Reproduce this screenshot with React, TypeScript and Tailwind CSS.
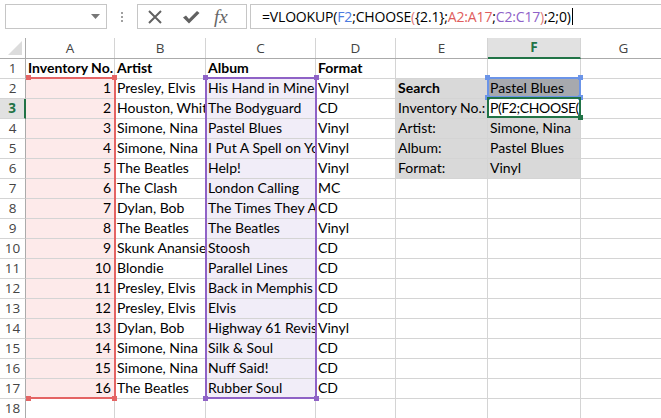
import React from "react";

const COLS = [
  { key: "A", w: 89 },
  { key: "B", w: 91 },
  { key: "C", w: 110 },
  { key: "D", w: 80 },
  { key: "E", w: 92 },
  { key: "F", w: 93 },
  { key: "G", w: 86 },
];

const DATA: [string, string, string][] = [
  ["Presley, Elvis", "His Hand in Mine", "Vinyl"],
  ["Houston, Whitney", "The Bodyguard", "CD"],
  ["Simone, Nina", "Pastel Blues", "Vinyl"],
  ["Simone, Nina", "I Put A Spell on You", "Vinyl"],
  ["The Beatles", "Help!", "Vinyl"],
  ["The Clash", "London Calling", "MC"],
  ["Dylan, Bob", "The Times They Are a-Changin'", "CD"],
  ["The Beatles", "The Beatles", "Vinyl"],
  ["Skunk Anansie", "Stoosh", "CD"],
  ["Blondie", "Parallel Lines", "CD"],
  ["Presley, Elvis", "Back in Memphis", "CD"],
  ["Presley, Elvis", "Elvis", "CD"],
  ["Dylan, Bob", "Highway 61 Revisited", "Vinyl"],
  ["Simone, Nina", "Silk & Soul", "CD"],
  ["Simone, Nina", "Nuff Said!", "CD"],
  ["The Beatles", "Rubber Soul", "CD"],
];

const LOOKUP: Record<number, [string, string, boolean?]> = {
  2: ["Search", "Pastel Blues", true],
  3: ["Inventory No.:", "P(F2;CHOOSE({"],
  4: ["Artist:", "Simone, Nina"],
  5: ["Album:", "Pastel Blues"],
  6: ["Format:", "Vinyl"],
};

type CellProps = {
  w: number;
  bg?: string;
  right?: boolean;
  bold?: boolean;
  tight?: boolean;
  children?: React.ReactNode;
};

function Cell({ w, bg, right, bold, tight, children }: CellProps) {
  return (
    <div
      className={`h-full shrink-0 border-r border-b border-[#d4d4d4] overflow-hidden whitespace-nowrap flex items-end pb-[1px] text-[14px] leading-[18px] text-black ${
        right ? "justify-end pr-[3px]" : "pl-[2px]"
      } ${bold ? "font-bold" : ""} ${tight ? "tracking-[-0.4px]" : ""} ${bg ?? ""}`}
      style={{ width: w }}
    >
      {children}
    </div>
  );
}

function Handle({ className }: { className: string }) {
  return <div className={`absolute w-[5px] h-[5px] ${className}`} />;
}

function FormulaBar() {
  return (
    <div className="h-[38px] flex items-start pt-[4px] bg-white">
      <div className="ml-[5px] w-[102px] h-[25px] border border-[#c6c6c6] flex items-center justify-end pr-[6px]">
        <svg width="9" height="5" viewBox="0 0 9 5">
          <path d="M0 0 L9 0 L4.5 5 Z" fill="#777" />
        </svg>
      </div>
      <div className="w-[30px] h-[25px] flex flex-col items-center justify-center gap-[2px]">
        <div className="w-[2px] h-[2px] bg-[#a0a0a0]" />
        <div className="w-[2px] h-[2px] bg-[#a0a0a0]" />
        <div className="w-[2px] h-[2px] bg-[#a0a0a0]" />
      </div>
      <div className="w-[110px] h-[25px] border border-[#c6c6c6] flex items-center">
        <svg className="ml-[9px]" width="16" height="16" viewBox="0 0 16 16">
          <path d="M2 2 L14 14 M14 2 L2 14" stroke="#616161" strokeWidth="2" />
        </svg>
        <svg className="ml-[19px]" width="18" height="16" viewBox="0 0 18 16">
          <path d="M1 8.5 L4 6.5 L7 10 L15 2 L17.5 4 L7 14.5 Z" fill="#616161" />
        </svg>
        <span
          className="ml-[14px] text-[19px] italic text-[#666] leading-none"
          style={{ fontFamily: '"Liberation Serif", serif' }}
        >
          fx
        </span>
      </div>
      <div className="ml-[3px] flex-1 h-[25px] border-t border-b border-l border-[#c6c6c6] flex items-center pl-[11px] text-[14px] text-black">
        <span style={{ fontFamily: '"Open Sans", sans-serif', letterSpacing: "-0.17px" }}>
          =VLOOKUP(<span className="text-[#4b7be0]">F2</span>;CHOOSE
          <span className="text-[#e07a7a]">(</span>
          {"{2.1};"}
          <span className="text-[#e05c5c]">A2:A17</span>;
          <span className="text-[#8e62c8]">C2:C17</span>
          <span className="text-[#e07a7a]">)</span>;2;0)
        </span>
        <div className="w-[1px] h-[17px] bg-black ml-[1px]" />
      </div>
    </div>
  );
}

function HeaderRow() {
  return (
    <div
      className="h-[21px] flex border-b border-[#ababab] text-[13.5px] text-[#444]"
      style={{ fontFamily: '"Open Sans", sans-serif' }}
    >
      <div className="w-[26px] shrink-0 h-full border-r border-[#ababab] relative">
        <svg className="absolute right-[3px] bottom-[3px]" width="14" height="14" viewBox="0 0 14 14">
          <path d="M14 0 L14 14 L0 14 Z" fill="#dcdcdc" />
        </svg>
      </div>
      {COLS.map((c) =>
        c.key === "F" ? (
          <div
            key={c.key}
            className="shrink-0 h-[21px] -mb-[1px] bg-[#e1e1e1] border-r border-[#d4d4d4] border-b-2 border-b-[#217346] flex items-center justify-center font-bold text-[#217346]"
            style={{ width: c.w }}
          >
            F
          </div>
        ) : (
          <div
            key={c.key}
            className="shrink-0 h-full border-r border-[#d4d4d4] flex items-center justify-center"
            style={{ width: c.w }}
          >
            {c.key}
          </div>
        )
      )}
    </div>
  );
}

function RowHeader({ n }: { n: number }) {
  const active = n === 3;
  return (
    <div
      className={`w-[26px] shrink-0 h-full border-b border-[#d4d4d4] flex items-center justify-center text-[13.5px] ${
        active
          ? "bg-[#e1e1e1] border-r-2 border-r-[#217346] text-[#217346] font-bold"
          : "border-r border-r-[#ababab] text-[#444]"
      }`}
      style={{ fontFamily: '"Open Sans", sans-serif' }}
    >
      {n}
    </div>
  );
}

function Row({ n }: { n: number }) {
  const d = n >= 2 && n <= 17 ? DATA[n - 2] : null;
  const look = LOOKUP[n];
  let a: React.ReactNode = null;
  let b: React.ReactNode = null;
  let c: React.ReactNode = null;
  let dd: React.ReactNode = null;
  if (n === 1) {
    a = "Inventory No.";
    b = "Artist";
    c = "Album";
    dd = "Format";
  } else if (d) {
    a = n - 1;
    b = d[0];
    c = d[1];
    dd = d[2];
  }
  const lookBg = look ? "bg-[#d9d9d9]" : "";
  let fBg = lookBg;
  if (n === 2) fBg = "bg-[#a7a9ae]";
  if (n === 3) fBg = "bg-white";
  return (
    <div className="h-[20px] flex">
      <RowHeader n={n} />
      <Cell w={COLS[0].w} right={n > 1} bold={n === 1} bg={d ? "bg-[#fdeaea]" : ""}>
        {a}
      </Cell>
      <Cell w={COLS[1].w} bold={n === 1}>
        {b}
      </Cell>
      <Cell w={COLS[2].w} bold={n === 1} bg={d ? "bg-[#f1edf8]" : ""}>
        {c}
      </Cell>
      <Cell w={COLS[3].w} bold={n === 1}>
        {dd}
      </Cell>
      <Cell w={COLS[4].w} bg={lookBg} bold={look?.[2]}>
        {look?.[0]}
      </Cell>
      <Cell w={COLS[5].w} bg={fBg} tight={n === 3}>
        {look?.[1]}
      </Cell>
      <Cell w={COLS[6].w} />
    </div>
  );
}

export default function App() {
  const rows = Array.from({ length: 18 }, (_, i) => i + 1);
  return (
    <div className="w-[661px] h-[418px] overflow-hidden bg-white select-none">
      <FormulaBar />
      <HeaderRow />
      <div className="relative" style={{ fontFamily: 'Lato, "Noto Sans", sans-serif' }}>
        {rows.map((n) => (
          <Row key={n} n={n} />
        ))}

        {/* A2:A17 reference */}
        <div className="absolute left-[26px] top-[18px] w-[90px] h-[322px] border-2 border-[#e46464] border-l-0 pointer-events-none" />
        <Handle className="left-[26px] top-[16px] w-[3px] bg-[#e46464]" />
        <Handle className="left-[112px] top-[16px] bg-[#e46464]" />
        <Handle className="left-[26px] top-[337px] w-[3px] bg-[#e46464]" />
        <Handle className="left-[112px] top-[337px] bg-[#e46464]" />

        {/* C2:C17 reference */}
        <div className="absolute left-[205px] top-[18px] w-[112px] h-[322px] border-2 border-[#8f62c6] pointer-events-none" />
        <Handle className="left-[203px] top-[16px] bg-[#8f62c6]" />
        <Handle className="left-[314px] top-[16px] bg-[#8f62c6]" />
        <Handle className="left-[203px] top-[337px] bg-[#8f62c6]" />
        <Handle className="left-[314px] top-[337px] bg-[#8f62c6]" />

        {/* F2 reference */}
        <div className="absolute left-[487px] top-[18px] w-[94px] h-[21px] border-2 border-[#6b94e8] pointer-events-none" />
        <Handle className="left-[485px] top-[16px] bg-[#6b94e8]" />
        <Handle className="left-[578px] top-[16px] bg-[#6b94e8]" />
        <Handle className="left-[485px] top-[36px] bg-[#6b94e8]" />
        <Handle className="left-[578px] top-[36px] bg-[#6b94e8]" />

        {/* active cell F3 */}
        <div className="absolute left-[487px] top-[38px] w-[94px] h-[21px] border-2 border-[#217346] pointer-events-none" />
        <Handle className="left-[578px] top-[56px] bg-[#217346]" />
      </div>
    </div>
  );
}
